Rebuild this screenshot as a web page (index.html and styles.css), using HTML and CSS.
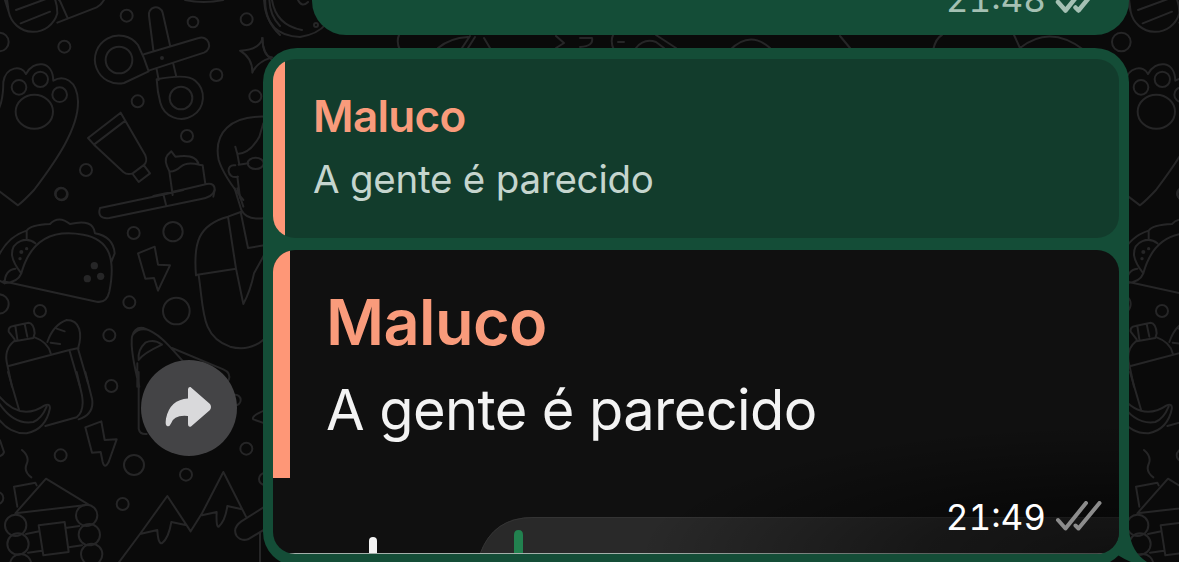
FILE: index.html
```html
<!DOCTYPE html>
<html lang="pt">
<head>
<meta charset="utf-8">
<title>Chat</title>
<link rel="stylesheet" href="styles.css">
</head>
<body>
<svg class="wallpaper" width="1179" height="562" viewBox="0 0 1179 562" aria-hidden="true">
  <defs>
    <g id="doodles">
      <g transform="scale(.33333)">
        <path d="M10 -15L26 35M20 -10L26 35A75 75 0 0 0 172 40Q172 5 158 -15M48 30L138 -3M62 70L150 35M172 68L290 22Q308 12 316 -8M168 -10L180 3L202 52"/>
        <circle cx="-2" cy="126" r="28"/><circle cx="380" cy="47" r="18"/><circle cx="193" cy="140" r="18"/><circle cx="579" cy="66" r="16"/><circle cx="740" cy="58" r="18"/><circle cx="649" cy="225" r="18"/><circle cx="413" cy="304" r="18"/><circle cx="561" cy="408" r="18"/><circle cx="258" cy="510" r="18"/><circle cx="766" cy="289" r="18"/>
        <path d="M446 214L372 249A72 72 0 1 1 414 135Q432 170 446 214ZM432 163L596 114A23 23 0 0 1 612 158L446 212M460 150L447 48A20 20 0 0 1 488 38L510 136M470 208L476 240M520 192L529 230M470 238Q562 220 586 242A65 65 0 1 1 481 308Q472 275 470 238"/>
        <circle cx="357" cy="180" r="40"/><circle cx="543" cy="294" r="34"/><circle cx="486" cy="174" r="3"/>
        <path d="M720 152Q778 150 788 114Q788 170 816 172Q770 186 757 218Q758 174 720 152ZM555 0Q610 12 670 0M796 -5Q792 60 840 105M808 -5Q808 45 840 78"/>
        <path d="M-5 330Q10 300 10 246C18 198 66 195 78 222C100 180 158 180 160 242C190 224 232 240 234 304C236 384 170 480 102 570Q74 600 54 616L-20 560"/>
        <circle cx="57" cy="262" r="22"/><circle cx="121" cy="238" r="23"/><circle cx="179" cy="284" r="22"/><ellipse cx="103" cy="335" rx="56" ry="51"/>
        <path d="M264 414L362 338L376 362L282 434ZM282 434L370 516Q382 526 398 520L430 496Q444 486 436 466L376 362M398 522L416 546L450 520L432 496M518 585L508 514Q490 480 502 466L514 454L526 470Q590 460 596 494L608 496L616 552M508 514Q524 516 542 500T598 494M460 588L560 566L620 552Q645 548 644 570L640 590"/>
        <path d="M800 350C690 345 640 400 656 480Q672 530 730 600M706 440L712 462Q750 460 778 410L790 370M712 462L718 494M706 496C676 490 680 540 714 530M716 494L745 490M712 530L720 594"/>
        <ellipse cx="767" cy="490" rx="24" ry="17"/><circle cx="183" cy="581" r="18"/>
      </g>
      <g transform="translate(0 190) scale(.33333)">
        <path d="M300 54L488 14L550 0M490 12L498 44M300 54Q290 88 328 84L600 28Q638 22 644 0"/>
        <circle cx="401" cy="129" r="18"/><circle cx="519" cy="125" r="29"/><circle cx="388" cy="337" r="18"/><circle cx="529" cy="363" r="40"/><circle cx="120" cy="363" r="18"/><circle cx="328" cy="436" r="18"/><circle cx="-3" cy="342" r="29"/>
        <path d="M10 274L290 335Q320 340 328 305C348 205 328 148 250 134C150 115 90 155 64 250Q54 276 14 280Q14 240 46 236M64 250Q40 220 36 196C34 150 82 140 106 160M-10 210Q20 140 80 122Q90 105 150 102Q176 75 210 102Q280 85 285 130Q340 140 344 190L334 216M80 122V148M-8 268L14 280"/>
        <g fill="#262627" stroke="none"><circle cx="283" cy="227" r="11"/><circle cx="302" cy="259" r="11"/><circle cx="262" cy="266" r="11"/><circle cx="64" cy="186" r="6"/><circle cx="80" cy="176" r="5"/><circle cx="60" cy="206" r="5"/></g>
        <path d="M414 190L464 170L474 224L510 226L474 302L462 264L436 266ZM588 256C580 160 594 104 684 80L722 66L744 174L792 166M684 80L708 236L730 342Q752 300 762 250L792 196M592 254L708 236M596 256C612 360 602 440 690 470Q750 486 794 446M704 -5L724 60Q740 92 794 84M712 -5L730 50"/>
        <path d="M44 448L26 425Q24 410 40 408L86 398Q102 400 104 430L100 444L44 454ZM46 408L52 448M74 402L82 440M42 454Q10 480 22 525L36 590M104 442Q144 456 152 490M26 528L208 480L236 474M142 456Q160 404 200 390C240 390 248 430 234 476L264 580M208 480L240 590M170 416L194 424M152 458L180 462"/>
        <path d="M418 590Q390 480 396 440Q404 410 430 414C480 430 510 470 550 515M400 432Q420 410 450 422M416 510Q412 480 436 458Q462 446 486 464Q430 490 416 510ZM516 474L670 538Q694 548 686 570M412 520V590"/>
        <circle cx="185" cy="13" r="18"/>
      </g>
      <g transform="translate(0 372) scale(.33333)">
        <circle cx="334" cy="42" r="18"/><circle cx="182" cy="250" r="18"/><circle cx="402" cy="279" r="30"/><circle cx="558" cy="308" r="18"/><circle cx="368" cy="396" r="18"/><circle cx="739" cy="230" r="18"/><circle cx="706" cy="84" r="16"/><circle cx="-8" cy="378" r="18"/><circle cx="795" cy="321" r="18"/>
        <path d="M24 0L58 116M230 0L246 70Q254 116 230 136L136 162M256 0L276 80Q284 126 236 142M-5 70Q60 150 134 100Q150 94 150 108Q138 172 80 184Q30 186 -5 140M-5 90Q40 160 100 150Q125 140 140 104M0 205L12 240Q10 250 -5 254M416 0V170Q420 188 440 186"/>
        <path d="M256 166L304 148L314 204L350 202L326 270Q314 292 308 270L302 240L276 242ZM66 234Q90 254 80 276T94 316M52 404L42 344L106 332L110 340M46 424L138 320L266 398ZM116 460L194 450L206 540L130 550ZM78 486L118 478M196 468L238 462M84 542L126 536M206 526L246 520"/>
        <circle cx="47" cy="460" r="32"/><circle cx="54" cy="516" r="32"/><circle cx="260" cy="430" r="32"/><circle cx="268" cy="488" r="32"/><circle cx="62" cy="578" r="32"/><circle cx="275" cy="547" r="32"/>
        <path d="M356 572L420 486L502 372L572 478L606 424L670 300L738 434M420 486L472 474Q474 516 486 514Q506 498 514 450L560 460M606 430L650 420Q648 466 656 464Q676 446 682 402L726 412M794 404L724 448Q696 468 710 492Q722 508 744 502L794 472M780 480V570M794 115Q752 132 760 142L794 154"/>
      </g>
    </g>
  </defs>
  <g fill="none" stroke="#262627" stroke-width="6" stroke-linejoin="round" stroke-linecap="round">
    <use href="#doodles"/>
    <use href="#doodles" x="1122"/>
    <g stroke-width="2">
      <path d="M264 0Q266 36 300 37Q318 34 326 24M272 0Q276 25 302 30M298 0Q302 8 308 2M262 38Q263 54 272 60M399 35Q396 42 400 50M438 48Q450 38 468 37M462 48L470 36M468 48L475 37M484 38L490 48M556 36L564 43L556 48M580 38L592 38Q594 46 580 47M613 35Q610 42 614 50M618 42H624M636 48Q644 38 656 42L664 48M656 35L676 48M730 50Q750 30 770 48M840 36L850 48M933 50Q936 38 942 35M1014 35L1020 48Q1050 24 1084 50"/>
      <circle cx="316" cy="25" r="2"/>
    </g>
  </g>
</svg>

<main class="chat">
  <article class="bubble bubble-previous">
    <span class="meta">
      <time>21:48</time>
      <svg class="ticks" width="48" height="34" viewBox="0 0 48 34"><path d="M3 19L10.500 27.500L31 2M20.500 24.500L23.500 27.500L44.500 2"/></svg>
    </span>
  </article>

  <div class="row">
    <button class="forward" aria-label="Encaminhar">
      <svg width="96" height="96" viewBox="0 0 96 96"><path transform="translate(0 1.500)" d="M47 28Q47 25 49.500 25.500L69 42.500Q71 45.500 69 48.500L50 65Q47 66 47 62V54.500Q33 53 30 62Q28.500 65.500 26 64.500Q24 64 25 57Q29 38 47 37Z"/></svg>
    </button>
    <article class="bubble bubble-current">
      <section class="quote">
        <strong class="quote-name">Maluco</strong>
        <span class="quote-text">A gente é parecido</span>
      </section>
      <section class="photo">
        <span class="photo-bar"></span>
        <strong class="photo-name">Maluco</strong>
        <span class="photo-text">A gente é parecido</span>
        <svg class="photo-foot" width="846" height="40" viewBox="0 0 846 40">
          <path d="M207 40Q220 3 260 3H846V40Z" fill="#292929"/>
          <path d="M207 40Q220 3.500 260 3.500H846" fill="none" stroke="#343434"/>
          <path d="M96 40V27Q96 23 100 23Q104 23 104 27V40Z" fill="#f4f4f4"/>
          <path d="M241 40V21Q241 16 245.500 16Q250 16 250 21V40Z" fill="#22814f"/>
          <path d="M16 39.500H832" stroke="#a3b0aa"/>
        </svg>
        <span class="shade"></span>
        <span class="meta">
          <time>21:49</time>
          <svg class="ticks" width="48" height="34" viewBox="0 0 48 34"><path d="M3 19L10.500 27.500L31 2M20.500 24.500L23.500 27.500L44.500 2"/></svg>
        </span>
      </section>
      <svg class="tail" width="40" height="36" viewBox="0 0 40 36"><path d="M19 0V4Q21 26 37 36H14V0Z" fill="#144d37"/><path d="M0 36Q5 33 8.500 29.500Q14 33 21 36Z" fill="#0a0a0a"/></svg>
    </article>
  </div>
</main>
</body>
</html>
```
FILE: styles.css
```css
* { box-sizing: border-box; }

body {
  margin: 0;
  height: 562px;
  overflow: hidden;
  background: #0a0a0a;
  font-family: Inter, "Liberation Sans", sans-serif;
}

.wallpaper {
  position: absolute;
  inset: 0;
}

.chat {
  position: relative;
  display: flex;
  flex-direction: column;
  align-items: flex-end;
  gap: 13px;
  height: 562px;
  padding-right: 50px;
  overflow: hidden;
}

.bubble {
  flex: none;
  background: #144d37;
}

.bubble-previous {
  display: flex;
  justify-content: flex-end;
  align-items: flex-end;
  width: 817px;
  height: 35px;
  padding: 0 26px 18px 0;
  border-radius: 0 0 34px 34px;
}

.row {
  display: flex;
  flex: none;
  align-items: flex-start;
  gap: 26px;
}

.forward {
  width: 96px;
  height: 96px;
  margin-top: 312px;
  padding: 0;
  border: 0;
  border-radius: 50%;
  background: #444446;
}

.forward svg {
  display: block;
  fill: #d9d9db;
}

.bubble-current {
  position: relative;
  display: flex;
  flex-direction: column;
  gap: 12px;
  width: 866px;
  height: 518px;
  padding: 11px 10px;
  border-radius: 34px 34px 0 34px;
}

.quote,
.photo {
  display: flex;
  flex-direction: column;
  flex: none;
  overflow: hidden;
  border-radius: 22px;
}

.quote {
  height: 179px;
  padding: 27px 0 0 40px;
  background: linear-gradient(90deg, #fe9777 12px, #123c2c 12px);
}

.quote-name,
.photo-name {
  color: #f99b7b;
  font-weight: 600;
}

.quote-name {
  font-size: 44px;
  line-height: 60px;
  letter-spacing: -.7px;
}

.quote-text {
  color: #c5d5ce;
  font-size: 38.5px;
  line-height: 67px;
  letter-spacing: -.23px;
}

.photo {
  position: relative;
  height: 304px;
  padding: 32px 0 0 53px;
  background: #101010;
}

.photo-bar {
  position: absolute;
  left: 0;
  top: 0;
  width: 17px;
  height: 228px;
  background: #fe9777;
}

.photo-name {
  font-size: 63px;
  line-height: 80px;
  letter-spacing: -.6px;
}

.photo-text {
  color: #f3f3f3;
  font-size: 56px;
  line-height: 97px;
  letter-spacing: -.6px;
}

.photo-foot {
  position: absolute;
  left: 0;
  bottom: 0;
}

.shade {
  position: absolute;
  right: 0;
  bottom: 0;
  width: 480px;
  height: 130px;
  background: radial-gradient(ellipse 100% 100% at bottom right, rgba(0, 0, 0, .6), rgba(0, 0, 0, .45) 40%, transparent 100%);
}

.meta {
  display: flex;
  align-items: center;
  gap: 9px;
  color: #fff;
  font-size: 35px;
  line-height: 32px;
  font-variant-numeric: tabular-nums;
}

.meta time {
  padding-bottom: 2px;
}

.photo .meta {
  position: absolute;
  right: 16px;
  bottom: 19px;
}

.bubble-previous .meta {
  color: #a4c0b3;
}

.ticks {
  fill: none;
  stroke: #8c8c8c;
  stroke-width: 4;
  stroke-linecap: round;
  stroke-linejoin: round;
}

.bubble-previous .ticks {
  stroke: #a4c0b3;
  stroke-width: 4.5;
}

.tail {
  position: absolute;
  left: 847px;
  top: 478px;
}
```
